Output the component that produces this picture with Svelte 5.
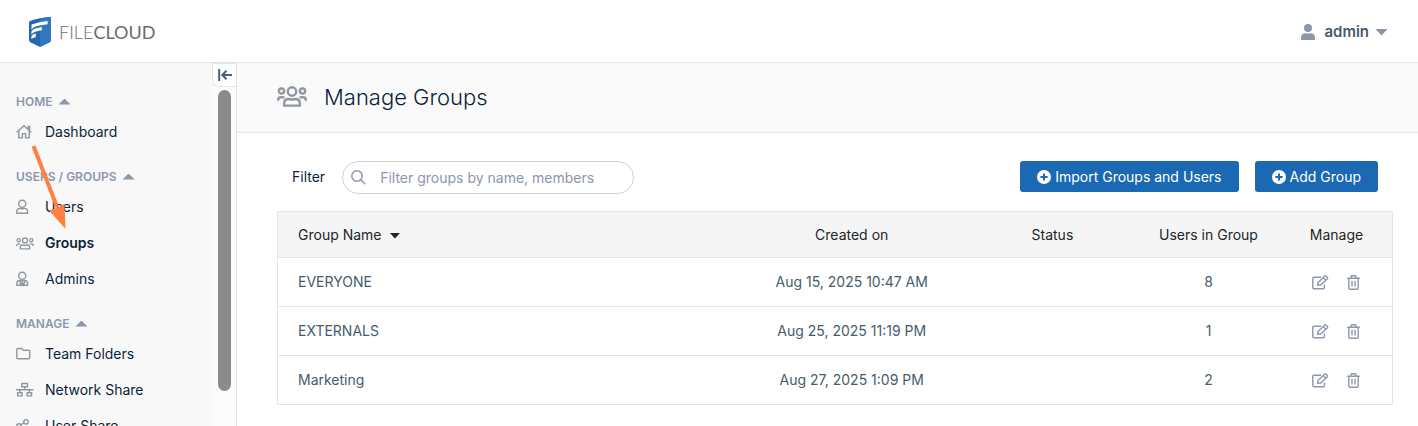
<script lang="ts">
	let filter = $state('');
	let activeItem = $state('Groups');

	const sections = [
		{ title: 'Home', items: [{ label: 'Dashboard', icon: 'home' }] },
		{
			title: 'Users / Groups',
			items: [
				{ label: 'Users', icon: 'user' },
				{ label: 'Groups', icon: 'groups' },
				{ label: 'Admins', icon: 'admin' }
			]
		},
		{
			title: 'Manage',
			items: [
				{ label: 'Team Folders', icon: 'folder' },
				{ label: 'Network Share', icon: 'network' },
				{ label: 'User Share', icon: 'share' }
			]
		}
	];

	const groups = [
		{ name: 'EVERYONE', created: 'Aug 15, 2025 10:47 AM', status: '', users: 8 },
		{ name: 'EXTERNALS', created: 'Aug 25, 2025 11:19 PM', status: '', users: 1 },
		{ name: 'Marketing', created: 'Aug 27, 2025 1:09 PM', status: '', users: 2 }
	];

	let visibleGroups = $derived(
		groups.filter((g) => g.name.toLowerCase().includes(filter.toLowerCase()))
	);
</script>

{#snippet groupsIcon()}
	<svg class="groupsIcon" viewBox="0 0 30 21" aria-hidden="true">
		<circle cx="15" cy="5.5" r="4.2" />
		<circle cx="4.5" cy="5" r="2.6" />
		<circle cx="25.5" cy="5" r="2.6" />
		<path d="M7.200 19.600v-2.400c0-2.600 1.800-4.200 4.400-4.200 1.200 0 1.900.6 3.400.6s2.200-.6 3.400-.6c2.600 0 4.400 1.600 4.400 4.200v2.400z" />
		<path d="M1 14.800c0-2.200 1.200-3.600 3-3.600h1.600c.7 0 1.300.2 1.800.6M29 14.800c0-2.200-1.200-3.600-3-3.600h-1.600c-.7 0-1.300.2-1.800.6" />
	</svg>
{/snippet}

{#snippet navIcon(name: string)}
	{#if name === 'groups'}
		{@render groupsIcon()}
	{:else}
		<svg viewBox="0 0 18 16" aria-hidden="true">
			{#if name === 'home'}
				<path d="M.7 8.200 8 1.800l7.300 6.400M12.200 5V2.400h1.400v4M2.800 7v6.800h3.600V9.600h3.200v4.200h3.600V7" />
			{:else if name === 'user'}
				<circle cx="6.2" cy="4.8" r="3.6" />
				<path d="M.8 14.300v-1.600c0-2 1.300-3.300 3.200-3.300.8 0 1.200.4 2.200.4s1.400-.4 2.200-.4c1.900 0 3.200 1.300 3.200 3.300v1.600z" />
			{:else if name === 'admin'}
				<circle cx="6.2" cy="4.8" r="3.6" />
				<path d="M.8 14.300v-1.600c0-2 1.300-3.200 3.200-3.200h4.400c1.900 0 3.200 1.200 3.200 3.200v1.600zM3.600 9.800l1.300 4.400 1.300-2.400 1.300 2.400 1.300-4.400M6.200 10v2" />
			{:else if name === 'folder'}
				<path d="M.8 3.600c0-.7.4-1.100 1.100-1.100h3.600l1.800 1.800h5.300c.7 0 1.100.4 1.100 1.100v6.200c0 .7-.4 1.100-1.100 1.100H1.900c-.7 0-1.100-.4-1.100-1.100z" />
			{:else if name === 'network'}
				<path d="M5.800 1.500h5.600v3.200H5.800zM1.600 10.700H6v3.200H1.600zM11.200 10.700h4.400v3.200h-4.400zM0 7.800h17.400M8.600 4.700v3.100M3.800 7.800v2.900M13.400 7.800v2.900" />
			{:else}
				<circle cx="2.8" cy="8" r="2.2" />
				<circle cx="10" cy="3.8" r="2.2" />
				<circle cx="10" cy="12.2" r="2.2" />
				<path d="m4.700 6.900 3.400-2M4.700 9.100l3.400 2" />
			{/if}
		</svg>
	{/if}
{/snippet}

{#snippet plusIcon()}
	<svg class="plus" viewBox="0 0 14 14" aria-hidden="true">
		<circle cx="7" cy="7" r="7" />
		<path d="M7 3.400v7.200M3.400 7h7.200" />
	</svg>
{/snippet}

<div class="app">
	<header class="topbar">
		<a class="brand" href="/" aria-label="FileCloud">
			<svg viewBox="0 0 22 30" aria-hidden="true">
				<path fill="#2469b0" d="M0 5.500Q0 4.400 1 4 10 .6 22 0v23q0 1.500-1.400 2.200L11 30l-9.600-4.800Q0 24.500 0 23z" />
				<path fill="#3377bd" d="M11 1.500Q16 .4 22 0v23q0 1.500-1.400 2.200L11 30z" />
				<path fill="#fff" d="M2.600 7.600Q10 4.800 18.600 4v3.200Q11 8 6 9.800 3.600 10.800 2.400 12.800zM2.400 14.600Q3.600 12.400 6 11.600q3-1 6.800-1.600v3.200q-4 .6-6.800 1.600-2.400 1-3.600 3zM2.400 19.400Q3.200 17.600 5 17l1.800-.5v3.600q-2 .6-4.400 2z" />
			</svg>
			<span class="wordmark">FILE<b>CLOUD</b></span>
		</a>
		<button class="account">
			<svg viewBox="0 0 14 16" aria-hidden="true">
				<circle cx="7" cy="4" r="4" />
				<path d="M0 16v-2.800C0 10.900 1.600 9.200 4 9.200c1 0 1.500.4 3 .4s2-.4 3-.4c2.400 0 4 1.700 4 4V16z" />
			</svg>
			admin
			<i class="caret down"></i>
		</button>
	</header>

	<div class="body">
		<aside class="sidebar">
			<nav>
				{#each sections as section}
					<section>
						<h2>{section.title} <i class="caret up"></i></h2>
						<ul>
							{#each section.items as item}
								<li>
									<a
										href="#{item.icon}"
										class:active={item.label === activeItem}
										onclick={() => (activeItem = item.label)}
									>
										<span class="navIcon">{@render navIcon(item.icon)}</span>
										{item.label}
									</a>
								</li>
							{/each}
						</ul>
					</section>
				{/each}
			</nav>
			<div class="rail">
				<button class="collapse" aria-label="Collapse sidebar">
					<svg viewBox="0 0 14 12" aria-hidden="true">
						<path d="M1.200 0v12M14 6H4.500M8.500 1.800 4.300 6l4.200 4.200" />
					</svg>
				</button>
				<div class="thumb"></div>
			</div>

			<!-- pointer to the Groups entry -->
			<svg class="pointer" viewBox="0 0 36 86" aria-hidden="true">
				<path stroke="#ff8042" stroke-width="4" d="M2.500 2 26 63" />
				<path fill="#ff8042" d="M18.500 67 33.500 60 34.500 85z" />
			</svg>
		</aside>

		<main>
			<div class="pageHeader">
				{@render groupsIcon()}
				<h1>Manage Groups</h1>
			</div>

			<div class="content">
				<div class="toolbar">
					<label for="filter">Filter</label>
					<div class="search">
						<svg viewBox="0 0 15 15" aria-hidden="true">
							<circle cx="6" cy="6" r="5.200" />
							<path d="m9.800 9.800 4.500 4.500" />
						</svg>
						<input
							id="filter"
							type="text"
							placeholder="Filter groups by name, members"
							bind:value={filter}
						/>
					</div>
					<div class="actions">
						<button>{@render plusIcon()} Import Groups and Users</button>
						<button>{@render plusIcon()} Add Group</button>
					</div>
				</div>

				<table>
					<thead>
						<tr>
							<th class="name">Group Name <i class="caret down small"></i></th>
							<th class="created">Created on</th>
							<th class="status">Status</th>
							<th class="users">Users in Group</th>
							<th class="manage">Manage</th>
						</tr>
					</thead>
					<tbody>
						{#each visibleGroups as group}
							<tr>
								<td class="name">{group.name}</td>
								<td>{group.created}</td>
								<td>{group.status}</td>
								<td>{group.users}</td>
								<td>
									<div class="rowActions">
										<button aria-label="Edit {group.name}">
											<svg viewBox="0 0 17 15" aria-hidden="true">
												<path d="M9 2.200H2c-.8 0-1.200.4-1.200 1.200v9.200c0 .8.4 1.200 1.200 1.200h9.200c.8 0 1.200-.4 1.200-1.200V9.500" />
												<path d="m5.600 10.300.4-2.800 6.500-6.300c.5-.5 1.200-.5 1.700 0l1 1c.5.5.5 1.200 0 1.700L8.600 10zM11.200 2.600l2.600 2.600" />
											</svg>
										</button>
										<button aria-label="Delete {group.name}">
											<svg class="trash" viewBox="0 0 13 15" aria-hidden="true">
												<path d="M.2 3.200h12.600M3.600 3l1-2.200h3.800l1 2.200M1.800 3.200v9.800c0 .8.400 1.200 1.200 1.200h7c.8 0 1.200-.4 1.200-1.200V3.200M5 5.800v5.800M8 5.800v5.800" />
											</svg>
										</button>
									</div>
								</td>
							</tr>
						{/each}
					</tbody>
				</table>
			</div>
		</main>
	</div>
</div>

<style>
	:global(body) {
		margin: 0;
	}

	.app {
		display: flex;
		flex-direction: column;
		height: 100vh;
		overflow: hidden;
		background: #fff;
		color: #0b1f3a;
		font: 14px/20px Inter, sans-serif;
	}

	.app * {
		box-sizing: border-box;
	}

	button {
		border: 0;
		padding: 0;
		background: none;
		color: inherit;
		font: inherit;
		cursor: pointer;
	}

	a {
		color: inherit;
		text-decoration: none;
	}

	svg {
		flex: none;
		fill: none;
	}

	.caret {
		display: inline-block;
		width: 12px;
		height: 6px;
		background: #8c97ab;
	}

	.caret.up {
		clip-path: polygon(50% 0, 100% 100%, 0 100%);
	}

	.caret.down {
		clip-path: polygon(0 0, 100% 0, 50% 100%);
	}

	.caret.small {
		width: 11px;
		margin-left: 4px;
		vertical-align: 1px;
		background: #212529;
	}

	.topbar {
		display: flex;
		flex: none;
		align-items: center;
		justify-content: space-between;
		height: 63px;
		padding: 2px 30px 0 29px;
		border-bottom: 1px solid #e5e5e5;
	}

	.brand {
		display: flex;
		align-items: center;
		gap: 8px;
	}

	.brand svg {
		width: 22px;
		height: 30px;
	}

	.wordmark {
		color: #6b6b6b;
		font: 300 18px/30px Lato, sans-serif;
	}

	.wordmark b {
		font-weight: 400;
	}

	.account {
		display: flex;
		align-items: center;
		color: #475b6b;
		font-size: 15px;
		font-weight: 600;
	}

	.account svg {
		width: 14px;
		height: 16px;
		margin-right: 9px;
		fill: #8c97ab;
	}

	.account .caret {
		width: 13px;
		height: 7px;
		margin-left: 6px;
	}

	.body {
		display: flex;
		flex: 1;
		min-height: 0;
	}

	.sidebar {
		position: relative;
		display: flex;
		flex: none;
		width: 237px;
		border-right: 1px solid #e5e5e5;
		background: #f8f8f8;
	}

	nav {
		flex: 1;
		padding: 26px 0 0 16px;
		overflow: hidden;
	}

	nav section {
		margin-bottom: 14px;
	}

	h2 {
		display: flex;
		align-items: center;
		gap: 6px;
		height: 25px;
		margin: 0;
		color: #8c97ab;
		font-size: 12px;
		font-weight: 600;
		text-transform: uppercase;
	}

	ul {
		margin: 0;
		padding: 0;
		list-style: none;
	}

	nav a {
		display: flex;
		align-items: center;
		height: 36px;
	}

	nav a.active {
		font-weight: 600;
	}

	.navIcon {
		display: flex;
		width: 29px;
		stroke: #8f979f;
		stroke-width: 1.4;
	}

	.navIcon svg {
		width: 18px;
		height: 16px;
	}

	.navIcon .groupsIcon {
		height: 13px;
		stroke-width: 2.2;
	}

	.rail {
		display: flex;
		flex-direction: column;
		align-items: center;
		width: 24px;
		background: #fcfcfc;
	}

	.collapse {
		display: flex;
		flex: none;
		align-items: center;
		justify-content: center;
		width: 100%;
		height: 24px;
		margin-bottom: 3px;
		border: 1px solid #e5e5e5;
		border-right: 0;
		border-radius: 0 0 0 6px;
		background: #fff;
	}

	.collapse svg {
		width: 14px;
		height: 12px;
		stroke: #4f5d80;
		stroke-width: 2;
	}

	.thumb {
		width: 13px;
		height: 83%;
		border-radius: 7px;
		background: #8b8b8b;
	}

	.pointer {
		position: absolute;
		top: 81px;
		left: 31px;
		width: 36px;
		height: 86px;
		pointer-events: none;
	}

	main {
		flex: 1;
		min-width: 0;
	}

	.pageHeader {
		display: flex;
		align-items: center;
		gap: 17px;
		height: 70px;
		padding: 0 40px 2px;
		border-bottom: 1px solid #e5e5e5;
		background: #fafafa;
	}

	.pageHeader .groupsIcon {
		width: 30px;
		height: 21px;
		stroke: #8f979f;
		stroke-width: 2.4;
	}

	h1 {
		margin: 0;
		font-size: 22px;
		font-weight: 300;
		line-height: 30px;
	}

	.content {
		padding: 28px 25px 0 40px;
	}

	.toolbar {
		display: flex;
		align-items: flex-start;
		margin-bottom: 17px;
		padding: 0 15px;
	}

	.toolbar label {
		margin-right: 17px;
		line-height: 32px;
	}

	.search {
		display: flex;
		align-items: center;
		width: 292px;
		height: 33px;
		padding: 0 16px 0 8px;
		border: 1px solid #cfcfcf;
		border-radius: 17px;
	}

	.search svg {
		width: 15px;
		height: 15px;
		margin-right: 14px;
		stroke: #8c97ab;
		stroke-width: 1.5;
	}

	.search input {
		flex: 1;
		min-width: 0;
		padding: 0;
		border: 0;
		outline: 0;
		background: none;
		color: inherit;
		font: inherit;
	}

	.search input::placeholder {
		color: #8c97ab;
		opacity: 1;
	}

	.actions {
		display: flex;
		gap: 16px;
		margin-left: auto;
	}

	.actions button {
		display: flex;
		align-items: center;
		gap: 4px;
		height: 31px;
		padding: 0 17px;
		border-radius: 3px;
		background: #1a69b2;
		color: #fff;
	}

	.plus {
		width: 14px;
		height: 14px;
		fill: #fff;
		stroke: none;
	}

	.plus path {
		stroke: #1a69b2;
		stroke-width: 2;
	}

	table {
		width: 100%;
		border: 1px solid #e5e5e5;
		border-collapse: collapse;
		table-layout: fixed;
		color: #475b6b;
		text-align: center;
	}

	th {
		height: 46px;
		padding: 0;
		background: #f5f5f5;
		color: #212529;
		font-weight: 400;
	}

	td {
		height: 49px;
		padding: 0;
		border-top: 1px solid #e5e5e5;
	}

	.name {
		width: 41%;
		padding-left: 20px;
		text-align: left;
	}

	.created {
		width: 21%;
	}

	.status {
		width: 15%;
	}

	.users {
		width: 13%;
	}

	.manage {
		width: 10%;
	}

	.rowActions {
		display: flex;
		justify-content: center;
		gap: 18px;
	}

	.rowActions svg {
		display: block;
		width: 17px;
		height: 15px;
		stroke: #8c97ab;
		stroke-width: 1.4;
	}

	.rowActions .trash {
		width: 13px;
	}
</style>
